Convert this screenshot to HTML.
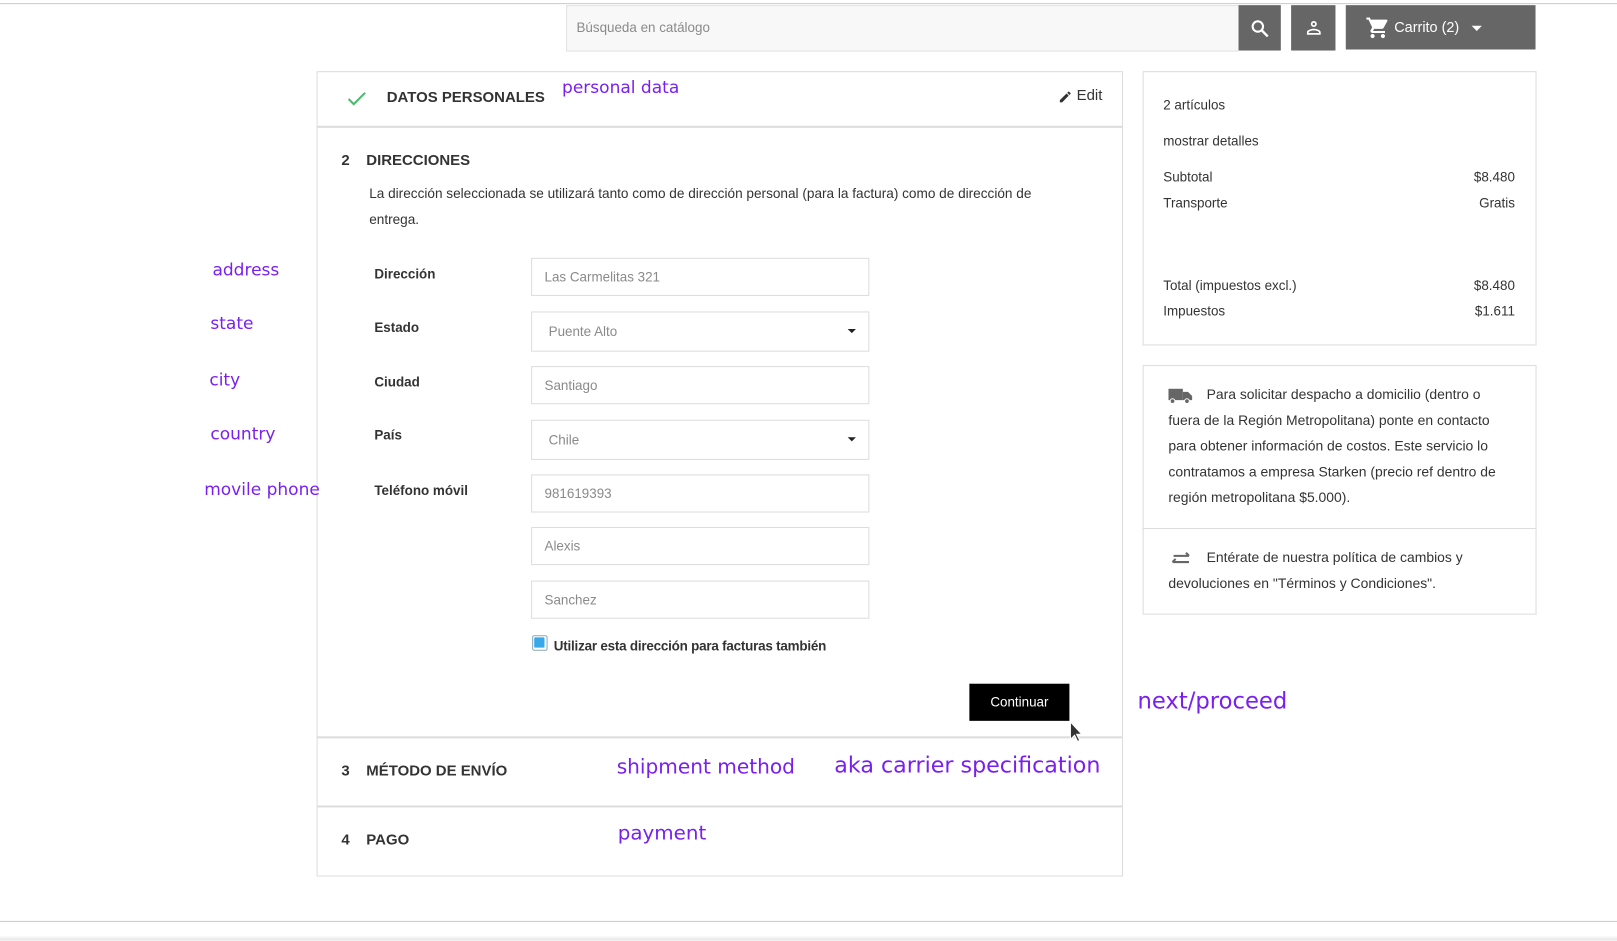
<!DOCTYPE html>
<html><head><meta charset="utf-8"><style>
html,body{margin:0;padding:0;background:#fff;overflow:hidden;width:1617px;height:940px}
#w{position:absolute;left:0;top:0;width:1568px;height:912px;transform:scale(1.03125);transform-origin:0 0;font-family:"Liberation Sans",sans-serif;color:#3a3a3a}
.a{position:absolute}
.pu{position:absolute;color:#7a1ff0;font-size:16.5px;white-space:nowrap;font-family:"DejaVu Sans",sans-serif}
.lbl{position:absolute;left:363px;font-size:13px;font-weight:bold;color:#333}
.in{position:absolute;left:515px;width:326px;height:35px;border:1px solid #ddd;box-sizing:content-box;font-size:13px;color:#8a8a8a;line-height:35px;padding-left:0}
.in span{margin-left:12px}
.car{position:absolute;right:12px;top:16px;width:0;height:0;border-left:4px solid transparent;border-right:4px solid transparent;border-top:4px solid #222}
.h{position:absolute;font-size:14.5px;font-weight:bold;color:#333}
.t{position:absolute;font-size:13px;color:#333;white-space:nowrap}
</style></head><body><div id="w">
<div class="a" style="left:0;top:3px;width:1568px;height:1px;background:#ccc"></div>
<div class="a" style="left:549px;top:5px;width:651px;height:43px;border:1px solid #e2e2e2;border-right:none;background:#f8f8f8"></div>
<div class="t" style="left:559px;top:19px;color:#8a8a8a">Búsqueda en catálogo</div>
<div class="a" style="left:1201px;top:5px;width:41px;height:44px;background:#666"></div>
<svg class="a" style="left:1211px;top:17px" width="22" height="22" viewBox="0 0 24 24"><circle cx="9.5" cy="9.5" r="5.5" stroke="#fff" stroke-width="2.2" fill="none"/><path d="M13.5 13.5l6.5 6.5" stroke="#fff" stroke-width="2.6"/></svg>
<div class="a" style="left:1252px;top:5px;width:43px;height:44px;background:#666"></div>
<svg class="a" style="left:1264px;top:17px" width="20" height="20" viewBox="0 0 24 24"><path d="M12 4a3.5 3.5 0 1 0 0 7 3.5 3.5 0 0 0 0-7zm0 2a1.5 1.5 0 1 1 0 3 1.5 1.5 0 0 1 0-3zM12 13c-2.7 0-8 1.3-8 4v3h16v-3c0-2.7-5.300-4-8-4zm-6 5v-1c.2-.7 3.3-2 6-2s5.8 1.3 6 2v1z" fill="#fff"/></svg>
<div class="a" style="left:1305px;top:5px;width:184px;height:43px;background:#666"></div>
<svg class="a" style="left:1324px;top:15px" width="24" height="24" viewBox="0 0 24 24"><path d="M7 18a2 2 0 1 0 0 4 2 2 0 0 0 0-4zM1 2v2h2l3.6 7.6-1.4 2.4A2 2 0 0 0 7 17h12v-2H7.4l1.1-2h7.5a2 2 0 0 0 1.7-1l3.6-6.5A1 1 0 0 0 20.5 4H5.2l-.9-2zm16 16a2 2 0 1 0 0 4 2 2 0 0 0 0-4z" fill="#fff"/></svg>
<div class="t" style="left:1352px;top:18px;color:#fff;font-size:14px">Carrito (2)</div>
<div class="a" style="left:1427px;top:25px;border-left:5px solid transparent;border-right:5px solid transparent;border-top:5px solid #fff"></div>

<div class="a" style="left:307px;top:69px;width:780px;height:779px;border:1px solid #ddd"></div>
<div class="a" style="left:307px;top:122px;width:781px;height:2px;background:#ddd"></div>
<div class="a" style="left:307px;top:714px;width:781px;height:2px;background:#ddd"></div>
<div class="a" style="left:307px;top:781px;width:781px;height:2px;background:#ddd"></div>
<svg class="a" style="left:336px;top:87px" width="20" height="18" viewBox="0 0 20 18"><path d="M2 9l5 5L18 3" stroke="#4cbb6c" stroke-width="2" fill="none"/></svg>
<div class="h" style="left:375px;top:87px">DATOS PERSONALES</div>
<div class="pu" style="left:545px;top:75px">personal data</div>
<svg class="a" style="left:1026px;top:87px" width="14" height="14" viewBox="0 0 24 24"><path d="M3 17.2V21h3.8L17.8 9.9l-3.7-3.7zM20.7 7a1 1 0 0 0 0-1.4l-2.3-2.3a1 1 0 0 0-1.4 0l-1.8 1.8 3.7 3.7z" fill="#333"/></svg>
<div class="t" style="left:1044px;top:85px;font-size:14.5px">Edit</div>

<div class="h" style="left:331px;top:148px">2&nbsp;&nbsp;&nbsp;&nbsp;DIRECCIONES</div>
<div class="t" style="left:358px;top:180px;font-size:13.2px">La dirección seleccionada se utilizará tanto como de dirección personal (para la factura) como de dirección de</div>
<div class="t" style="left:358px;top:205px;font-size:13.2px">entrega.</div>

<div class="pu" style="left:206px;top:252px">address</div>
<div class="pu" style="left:204px;top:304px">state</div>
<div class="pu" style="left:203px;top:359px">city</div>
<div class="pu" style="left:204px;top:411px">country</div>
<div class="pu" style="left:198px;top:465px">movile phone</div>

<div class="lbl" style="top:258px">Dirección</div>
<div class="lbl" style="top:310px">Estado</div>
<div class="lbl" style="top:363px">Ciudad</div>
<div class="lbl" style="top:414px">País</div>
<div class="lbl" style="top:468px">Teléfono móvil</div>

<div class="in" style="top:250px"><span>Las Carmelitas 321</span></div>
<div class="in" style="top:302px;height:37px;line-height:37px"><span style="margin-left:16px">Puente Alto</span><div class="car"></div></div>
<div class="in" style="top:355px"><span>Santiago</span></div>
<div class="in" style="top:407px;height:37px;line-height:37px"><span style="margin-left:16px">Chile</span><div class="car"></div></div>
<div class="in" style="top:460px"><span>981619393</span></div>
<div class="in" style="top:511px"><span>Alexis</span></div>
<div class="in" style="top:563px"><span>Sanchez</span></div>

<div class="a" style="left:516px;top:616px;width:13px;height:13px;border:1px solid #8ab;border-radius:2px;background:#fff"></div>
<div class="a" style="left:518px;top:618px;width:10px;height:10px;background:#3aa7e8;border-radius:1px"></div>
<div class="t" style="left:537px;top:619px;font-weight:bold;letter-spacing:-0.2px">Utilizar esta dirección para facturas también</div>

<div class="a" style="left:940px;top:663px;width:97px;height:36px;background:#000;color:#fff;font-size:13px;text-align:center;line-height:36px">Continuar</div>
<svg class="a" style="left:1037px;top:699px" width="14" height="22" viewBox="0 0 14 22"><path d="M1 1v17l4-4 3 6 2-1-3-6h5z" fill="#333" stroke="#fff" stroke-width="1"/></svg>
<div class="pu" style="left:1103px;top:668px;font-size:22px">next/proceed</div>

<div class="h" style="left:331px;top:740px">3&nbsp;&nbsp;&nbsp;&nbsp;MÉTODO DE ENVÍO</div>
<div class="pu" style="left:598px;top:732px;font-size:19.5px">shipment method</div>
<div class="pu" style="left:809px;top:730px;font-size:21.5px">aka carrier specification</div>
<div class="h" style="left:331px;top:807px">4&nbsp;&nbsp;&nbsp;&nbsp;PAGO</div>
<div class="pu" style="left:599px;top:796px;font-size:19.3px">payment</div>

<div class="a" style="left:1108px;top:69px;width:380px;height:264px;border:1px solid #ddd"></div>
<div class="t" style="left:1128px;top:94px">2 artículos</div>
<div class="t" style="left:1128px;top:129px">mostrar detalles</div>
<div class="t" style="left:1128px;top:164px">Subtotal</div><div class="t" style="right:99px;top:164px">$8.480</div>
<div class="t" style="left:1128px;top:189px">Transporte</div><div class="t" style="right:99px;top:189px">Gratis</div>
<div class="t" style="left:1128px;top:269px">Total (impuestos excl.)</div><div class="t" style="right:99px;top:269px">$8.480</div>
<div class="t" style="left:1128px;top:294px">Impuestos</div><div class="t" style="right:99px;top:294px">$1.611</div>

<div class="a" style="left:1108px;top:354px;width:380px;height:240px;border:1px solid #ddd"></div>
<div class="a" style="left:1108px;top:512px;width:382px;height:1px;background:#ddd"></div>
<svg class="a" style="left:1133px;top:375px" width="24" height="18" viewBox="0 0 24 18"><rect x="0" y="2" width="14" height="11" fill="#666"/><path d="M14 5h5l4 4v4h-9z" fill="#666"/><circle cx="4" cy="14" r="2.3" fill="#666" stroke="#fff"/><circle cx="18" cy="14" r="2.3" fill="#666" stroke="#fff"/></svg>
<div class="a" style="left:1133px;top:370px;width:334px;font-size:13.5px;line-height:25px;color:#333"><span style="display:inline-block;width:37px"></span>Para solicitar despacho a domicilio (dentro o fuera de la Región Metropolitana) ponte en contacto para obtener información de costos. Este servicio lo contratamos a empresa Starken (precio ref dentro de región metropolitana $5.000).</div>
<svg class="a" style="left:1134px;top:534px" width="22" height="16" viewBox="0 0 22 16"><path d="M3 11h16M3 11l3-3M19 5H4M19 5l-3-3" stroke="#666" stroke-width="2" fill="none"/></svg>
<div class="a" style="left:1133px;top:528px;width:334px;font-size:13.5px;line-height:25px;color:#333"><span style="display:inline-block;width:37px"></span>Entérate de nuestra política de cambios y devoluciones en "Términos y Condiciones".</div>

<div class="a" style="left:0;top:893px;width:1568px;height:1px;background:#ccc"></div>
<div class="a" style="left:0;top:907px;width:1568px;height:5px;background:linear-gradient(#fff,#e4e4e4)"></div>
</div></body></html>
